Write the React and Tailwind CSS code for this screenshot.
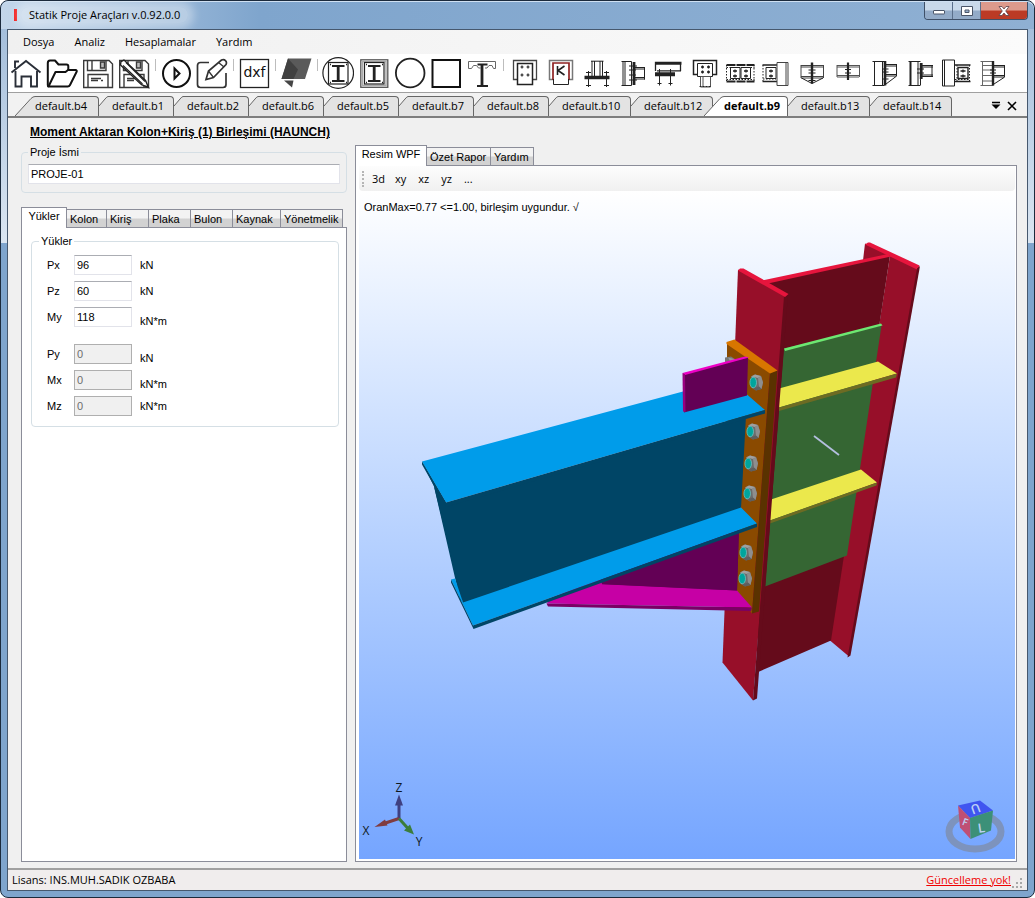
import React from "react";

const ui = "font-['Open_Sans','Noto_Sans',sans-serif]";
const form = "font-['Liberation_Sans',Arial,sans-serif]";

function Icon({ children }) {
  return (
    <svg viewBox="0 0 32 32" width="32" height="32" fill="none" stroke="#222" strokeWidth="1" aria-hidden="true">
      {children}
    </svg>
  );
}

const floppy = (
  <g stroke="#3a3a3a" strokeWidth="1.4">
    <path d="M1.7 3.5H27l3.5 3.5v23.5H1.7z" />
    <path d="M5.5 4v9.5h18.5V4M10 4v9" />
    <path d="M18.5 5h4v6h-4z" fill="#bbb" />
    <path d="M6 30V17.5h20V30" />
    <path d="M9 21.5h10M9 23.5h7M19 23.5h2" />
  </g>
);

const iSection = (
  <g>
    <rect x="6.5" y="5.5" width="19.5" height="21.5" strokeWidth="1.2" />
    <path d="M10 9h12.500M10 24h12.500" strokeWidth="2" />
    <path d="M16.200 9v15" strokeWidth="2.800" />
    <path d="M8 7.500h1M24 7.500h1M8 25.500h1M24 25.500h1" strokeWidth="1.500" />
  </g>
);

const icons = {
  home: (
    <g stroke="#2a2f38" strokeWidth="1.9">
      <path d="M1.500 15.500L16 4l14.500 11.500" />
      <path d="M5.500 14v15.500h6v-10h9.500v10h6V14" />
      <path d="M5 11V4.500h4" />
    </g>
  ),
  open: (
    <g stroke="#111" strokeWidth="2" strokeLinejoin="round">
      <path d="M2.500 29.500C1.800 29.500 1.800 29 1.800 28V6c0-1.600.7-2.500 2.200-2.500h5l3.500 4h8c1 0 1.800.8 1.800 1.800v4" />
      <path d="M2.500 29.500l7-14.500h10l2.500-2h7.500c1.200 0 1.600.9 1 2l-6.500 13c-.5 1-1.200 1.500-2.300 1.500z" />
    </g>
  ),
  save: floppy,
  saveAs: (
    <g>
      {floppy}
      <path d="M3 4.500l3-1.500L27.500 23.500l3 7-7-2.800L2.500 8z" fill="#fff" stroke="#222" strokeWidth="1.400" />
      <path d="M5 8.500L24.500 27M8 5.500L27 24.500M27.500 29l2.500 1" strokeWidth="1.200" />
    </g>
  ),
  run: (
    <g stroke="#111" strokeWidth="2">
      <circle cx="16.500" cy="16.500" r="13.500" />
      <path d="M14.500 11.500v10l5-5z" />
    </g>
  ),
  edit: (
    <g stroke="#333" strokeWidth="1.700">
      <path d="M13 5.500H4.500c-2 0-3 1-3 3V27.500c0 2 1 3 3 3H27c2 0 3-1 3-3V16" />
      <path d="M10 22.500l2.500-8.500L25.500 3c3-1.500 6 1.500 4.500 4.500L17.500 20.500z" fill="#fff" />
      <path d="M12.500 14l5 6.500M22.500 5.500l5.500 4.500" strokeWidth="1.300" />
    </g>
  ),
  dxf: (
    <g>
      <rect x="2.500" y="2.500" width="28" height="28" strokeWidth="1.300" />
      <text x="16.500" y="20" textAnchor="middle" fontSize="14" fill="#111" stroke="none" fontFamily="DejaVu Sans, sans-serif">dxf</text>
    </g>
  ),
  solid: (
    <g stroke="none">
      <path d="M8 1.500h23.500L25 22H1.500z" fill="#5a5a5a" />
      <path d="M8 1.500l10 11L13.500 22H1.500z" fill="#414141" />
      <path d="M4 23.500h9.500L12 30.500z" fill="#454545" />
    </g>
  ),
  roundI: (
    <g>
      <circle cx="16.200" cy="16" r="15.300" strokeWidth="1.200" />
      {iSection}
    </g>
  ),
  squareI: (
    <g>
      <rect x="2.800" y="2.800" width="27" height="27.500" stroke="#555" strokeWidth="1.300" />
      <rect x="4.500" y="4.500" width="23.500" height="24" stroke="#aaa" strokeWidth="1.500" />
      {iSection}
    </g>
  ),
  circle: <circle cx="16.200" cy="16" r="14.300" strokeWidth="1.800" />,
  square: <rect x="2.500" y="3" width="27.500" height="27" stroke="#111" strokeWidth="2" />,
  composite: (
    <g>
      <path d="M2.500 11.500v-7h27v7h-2l-1.500-3h-3l-2 2.500h-2M2.500 11.500h3l2-3h3l2 2.500h2" stroke="#666" />
      <path d="M11.500 7.500h10M11 29h11" strokeWidth="2.200" />
      <path d="M16 7v22" strokeWidth="2.800" />
    </g>
  ),
  plateDots: (
    <g>
      <path d="M9.500 22.500h-4v-19h23v19h-4" stroke="#444" strokeWidth="1.300" />
      <path d="M9.500 6.500h15V27.500h-15z" strokeWidth="1.500" />
      <path d="M12.500 10h3M18.500 10h3M12.500 18h3M18.500 18h3M14 8.500v3M20 8.500v3M14 16.500v3M20 16.500v3" strokeWidth="1.200" />
    </g>
  ),
  plateK: (
    <g>
      <path d="M9.500 22.500h-4v-19h23v19h-4" stroke="#777" strokeWidth="1.500" />
      <path d="M9 23V6h16v17" stroke="#8f2222" strokeWidth="1.700" />
      <path d="M9.500 22v5.500h15V22" />
      <path d="M13.500 9v9M20.500 9l-6.500 4.500 6.500 4.500" strokeWidth="1.600" />
    </g>
  ),
  base: (
    <g>
      <path d="M12 4v15M22.500 4v15M14.500 4v15M20 4v15M11 4.200h12.500" />
      <path d="M4.500 20.500h25" strokeWidth="3.500" />
      <path d="M8.500 14v16M26.500 14v16M6 15.500h5M24 15.500h5M6 28.500h5M24 28.500h5" />
    </g>
  ),
  side: (
    <g>
      <path d="M5.500 4.500h10M5.500 28.500h10M7 4.500v24M9 4.500v24M15.500 4.500v24" />
      <path d="M18 5v23" strokeWidth="2.800" />
      <path d="M18 10.500h11M18 12h11M18 20.500h11M18 22h11M28.500 10v12.500M13 9h8M13 13h7M13 18h7M13 23h8" />
    </g>
  ),
  seat: (
    <g>
      <path d="M3.500 14V5.500h26M3.500 7h26M28.500 5.500V14M5 13.800h24" strokeWidth="1.300" />
      <path d="M3 17.300h20" strokeWidth="4" />
      <path d="M7.500 12v16.500M18.500 12v16.500M5.500 26.500h4M16.500 26.500h4" />
    </g>
  ),
  hang: (
    <g>
      <path d="M9.500 17.500h-4v-14h23v14h-4" strokeWidth="1.500" />
      <path d="M9.500 6.500h15v13h-15z" />
      <path d="M13 10h3M19 10h3M13 15h3M19 15h3M14.500 8.500v3M20.500 8.500v3M14.500 13.500v3M20.500 13.500v3" strokeWidth="1.300" />
      <path d="M12.500 19.500h10V30h-10zM15 19.500V30" stroke="#555" />
      <path d="M11.500 29.500h12" strokeDasharray="2 1" />
    </g>
  ),
  splice: (
    <g>
      <path d="M2.500 8h28M2.500 24.500h28" strokeWidth="1.800" strokeDasharray="9 1" />
      <path d="M2.500 10.500h28M2.500 22.500h28M2.500 8v16M30 8v16" strokeDasharray="1.500 1.500" />
      <path d="M6.500 10.500h9.500v11H6.500zM17 10.500h9.500v11H17z" />
      <path d="M9 14h4M9 19h4M20 14h4M20 19h4M11 12.500v3M11 17.500v3M22 12.500v3M22 17.500v3" strokeWidth="1.300" />
    </g>
  ),
  spliceCol: (
    <g>
      <path d="M2.500 8H17M2.500 24.500H17" strokeWidth="1.600" />
      <path d="M3 8v16M3 22h13" strokeDasharray="1.500 1.500" />
      <path d="M6 10.500h10v11H6z" />
      <path d="M9 14h4M9 19h4M11 12.500v3M11 17.500v3" strokeWidth="1.300" />
      <path d="M17 5.500h11v23H17zM26 5.500v23" stroke="#444" />
    </g>
  ),
  twoHaunch: (
    <g>
      <path d="M5 8.500h22M5 10h22M5 19.500h22M5 21h22M5 8v13M27.500 8v13" stroke="#444" />
      <path d="M16 5.500v21" strokeWidth="2.400" />
      <path d="M5.500 21L16 26.500 27 21M12.500 13h7M12.500 16h7M12.500 23.500h7" />
    </g>
  ),
  twoPlain: (
    <g>
      <path d="M5 8.500h22M5 10h22M5 18.500h22M5 20h22M5 8v12M27.500 8v12" stroke="#555" />
      <path d="M16 5.500v17.500" strokeWidth="2.200" />
      <path d="M13 12.500h6M13 16h6" />
    </g>
  ),
  colHaunch: (
    <g>
      <path d="M4.500 4.500h12M4.500 28.500h12M6.500 4v24.500M14.500 4v24.500" />
      <path d="M17 4v24.500" strokeWidth="2.600" />
      <path d="M17 7.500h12M17 9h12M17 17.500h12M17 19h12M28.500 7v12M28 19.500L18 27M14 12h6.500M14 15h6.500M14 22h6.500" />
    </g>
  ),
  colPlain: (
    <g>
      <path d="M4.500 4.500h12M4.500 28.500h12M6.500 4v24.500M14 4v24.500" />
      <path d="M6.500 4v24.500" strokeWidth="2" />
      <path d="M17.200 6v16" strokeWidth="2.800" />
      <path d="M17 8.500h12M17 10h12M17 18h12M17 19.500h12M28 8v12M13 12h7M13 16h7M16.500 22v6" />
    </g>
  ),
  colPlate: (
    <g>
      <path d="M2.500 3h12v26h-12zM4.500 3v26" />
      <path d="M15 8h15.500M15 24.500h15.500" strokeWidth="1.600" />
      <path d="M29.500 8v16M15 22.500h14M17 8v16" strokeDasharray="1.500 1.500" />
      <path d="M18 10.500h10v11H18z" strokeWidth="1.400" />
      <path d="M20.500 14h5M20.500 19h5M23 12.500v3M23 17.500v3" strokeWidth="1.300" />
    </g>
  ),
  colStiff: (
    <g>
      <path d="M4.500 4.500h13M4.500 28.500h13M6.500 4v24.500M7 8.500h9.500M7 13h9.500M7 18.500h9.500M7 24h9.500" stroke="#666" />
      <path d="M17 4v24.500" strokeWidth="2.400" />
      <path d="M17 8.500h12M17 10h12M17 18.500h12M17 20h12M28.500 8v12M28 20.500L18 27M14 13h6M14 16h6" />
    </g>
  ),
};

const toolbar = [
  ["home", "Ana sayfa"], ["open", "Aç"], ["save", "Kaydet"], ["saveAs", "Farklı kaydet"], null,
  ["run", "Hesapla"], ["edit", "Düzenle"], null,
  ["dxf", "dxf"], null,
  ["solid", "3d"], null,
  ["roundI", "Daire I"], ["squareI", "Kare I"], ["circle", "Daire"], ["square", "Kare"], ["composite", "Kompozit"], null,
  ["plateDots", "Levha"], ["plateK", "Kaynaklı levha"], ["base", "Taban"], ["side", "Alın levhası"], ["seat", "Oturma"],
  ["hang", "Askı"], ["splice", "Ek"], ["spliceCol", "Kolon eki"], ["twoHaunch", "Çift guseli"], ["twoPlain", "Kiriş eki"],
  ["colHaunch", "Haunch"], ["colPlain", "Kolon kiriş"], ["colPlate", "Kolon levha"], ["colStiff", "Rijit"],
];

const docs = [
  ["default.b4", "w-[84px]"], ["default.b1", "w-[75px]"], ["default.b2", "w-[75px]"], ["default.b6", "w-[75px]"],
  ["default.b5", "w-[75px]"], ["default.b7", "w-[75px]"], ["default.b8", "w-[75px]"], ["default.b10", "w-[82px]"],
  ["default.b12", "w-[82px]"], ["default.b9", "w-[84px]"], ["default.b13", "w-[82px]"], ["default.b14", "w-[82px]"],
];

function DocTab({ name, width, first, active }) {
  const long = first || active;
  return (
    <button
      type="button"
      role="tab"
      aria-selected={active}
      className={`flex h-5 shrink-0 items-stretch text-[11px] ${width} ${active ? "relative z-10 -ml-[9px] font-bold" : ""}`}
    >
      {long ? (
        <svg width="20" height="20" className="shrink-0" aria-hidden="true">
          <path d="M0 20L16 2.500Q18 .5 20 .5V20z" fill={active ? "#fff" : "#e3e3e3"} />
          <path d="M0 20L16 2.500Q18 .5 20 .5" fill="none" stroke="#666" />
        </svg>
      ) : (
        <svg width="9" height="20" className="shrink-0" aria-hidden="true">
          <path d="M0 10L6 3Q8 .5 9 .5V20H0z" fill="#e3e3e3" />
          <path d="M0 10L6 3Q8 .5 9 .5" fill="none" stroke="#666" />
        </svg>
      )}
      <span
        className={`flex grow items-center whitespace-nowrap rounded-tr border-r border-t border-[#666] ${
          long ? "" : "pl-1"
        } ${active ? "bg-white" : "bg-[#e3e3e3]"}`}
      >
        {name}
      </span>
    </button>
  );
}

function PageTabs({ items, label }) {
  return (
    <div role="tablist" aria-label={label} className="flex items-end">
      {items.map(([name, width], i) => (
        <button
          key={name}
          type="button"
          role="tab"
          aria-selected={i === 0}
          className={`relative shrink-0 whitespace-nowrap border border-b-0 border-[#8b8d99] ${width} ${
            i === 0
              ? "z-10 -mb-px h-[21px] bg-white pb-1 text-center"
              : "-ml-px h-[18px] bg-linear-to-b from-[#f3f3f3] from-45% to-[#d2d2d2] to-55% pl-[3px] text-left"
          }`}
        >
          {name}
        </button>
      ))}
    </div>
  );
}

const loads = [
  ["Px", "96", "kN"],
  ["Pz", "60", "kN"],
  ["My", "118", "kN*m", "low"],
  ["Py", "0", "kN", "low", true],
  ["Mx", "0", "kN*m", "low", true],
  ["Mz", "0", "kN*m", "", true],
];

function LoadRow({ row }) {
  const [name, value, unit, low, off] = row;
  return (
    <div className="flex h-5 items-center">
      <label htmlFor={name} className="w-[27px]">{name}</label>
      <input
        id={name}
        defaultValue={value}
        disabled={off}
        className={`h-5 w-[58px] border px-0.5 ${
          off ? "border-[#afafaf] bg-[#f0f0f0] text-[#6d6d6d]" : "border-[#e2e3ea] border-t-[#abadb3] bg-white"
        }`}
      />
      <span className={`pl-2 ${low ? "self-end leading-3" : ""}`}>{unit}</span>
    </div>
  );
}

function Bolt({ x, y }) {
  return (
    <g transform={`translate(${x} ${y})`}>
      <path d="M-5-6L-1-8 5-6.500 7 0 5.500 6.500 0 8-5 5z" fill="#6c6c6c" />
      <path d="M-5-6L-1-8 5-6.500 2-4.500z" fill="#a0a0a0" />
      <path d="M2-4.500L5-6.500 7 0 5.500 6.500 3 4z" fill="#8e8e8e" />
      <path d="M3 4L5.500 6.500 0 8-3 6z" fill="#5f5f5f" />
      <ellipse cx="-2.800" cy="0" rx="3.300" ry="5.300" fill="#00a59d" stroke="#79c9c7" strokeWidth=".7" />
    </g>
  );
}

function Scene() {
  return (
    <svg viewBox="359 192 656 667" className="absolute inset-0 h-full w-full" role="img" aria-label="3d model">
      <path d="M865 244L919 267 849 657 830 641 890 256 863 261z" fill="#970f29" />
      <path d="M865 245L868 243 870 243 919.500 266 917 270z" fill="#e6153d" />
      <path d="M917 269L920 266.500 850.500 656 847.500 658z" fill="#650b1b" />
      <path d="M766 283L890 256 831 641 757 673z" fill="#650b1b" />
      <path d="M762 281L888 254.500 891 257 768 284z" fill="#e6153d" />
      <path d="M784 349L881.500 326 847 556 765 587z" fill="#356633" />
      <path d="M784 349L881 324 882.500 326 785 351.500z" fill="#6de872" />
      <path d="M779 389L878 362 897 374 779 408z" fill="#ebe84c" />
      <path d="M779 408L897 374 896 378 779 411.500z" fill="#6d6b23" />
      <path d="M771 500L861 470 877 483 770 521z" fill="#ebe84c" />
      <path d="M770 521L877 483 876.500 486 770 524z" fill="#6d6b23" />
      <path d="M814 436.500L839 455.500" stroke="#b4bfdf" strokeWidth="1.800" />

      <path d="M738 270L785 296 753 701 722.500 663z" fill="#970f29" />
      <path d="M784 297L788 295 775 460 757 699 753 701z" fill="#650b1b" />
      <path d="M738 271L740 269 743.500 269 788.500 294.500 785 297.500z" fill="#e6153d" />

      <path d="M727 344L770 373 752 614 737 594 727 580z" fill="#8a4a00" />
      <path d="M770 373L777.500 371 759 612 752 614z" fill="#5a3200" />
      <path d="M726.500 344.500V342.500L734.500 340 777.500 371 770 374z" fill="#d87600" />
      <path d="M725 358L731 357 737 361 733 366 725 364z" fill="#777" />
      <path d="M728 358L736 360 732 365z" fill="#999" />

      <path d="M739 528L737 592 590 588z" fill="#630055" />
      <path d="M602 578L602 584.500 737 591 752 608 546.500 604 552 598z" fill="#c600a5" />
      <path d="M600 576L739 528 737 591 602 584.800z" fill="#630055" />
      <path d="M546.500 604L752 608 751 611.500 548 607z" fill="#7a0065" />

      <path d="M422 462L446 503 463 603 460 600 434 487z" fill="#004566" />
      <path d="M434 487L446 504 746 416 741 509 463 604z" fill="#004566" />
      <path d="M422 462L683 392 747 378 747 395 765 410.500 446 503z" fill="#009cea" />
      <path d="M422 462L446 503 765 410.500 765 414 446 507.500 422 465z" fill="#004566" />
      <path d="M451 580L455 579 463 603 741 508 757 524 473 626z" fill="#009cea" />
      <path d="M451 580L473 626 757 524 757 527.500 473.500 629.500 451 583z" fill="#004566" />

      <path d="M683 374L748 358 747 396 684 413z" fill="#630055" />
      <path d="M682.500 373.500L745 357 749 358 685 375.500z" fill="#ee00c6" />
      <path d="M682.500 373.500L685 375 685.500 412.500 683 412z" fill="#99007f" />

      <Bolt x={756} y={383} />
      <Bolt x={753} y={432} />
      <Bolt x={751} y={464} />
      <Bolt x={750} y={494} />
      <Bolt x={746} y={553} />
      <Bolt x={745} y={579} />

      <g>
        <path d="M399 819V804" stroke="#3f4080" strokeWidth="3" />
        <path d="M399 795L403 806H395z" fill="#3f4080" />
        <path d="M399 819L384 824" stroke="#803c40" strokeWidth="3" />
        <path d="M374.500 827.500L385 820 387.500 826z" fill="#803c40" />
        <path d="M399 819L408 829" stroke="#3b7d3b" strokeWidth="3" />
        <path d="M414 835L404 831 410 825z" fill="#3b7d3b" />
        <g fontSize="12" fill="#101820" textAnchor="middle" fontFamily="Open Sans, sans-serif">
          <text x="399" y="792">Z</text>
          <text x="366" y="835">X</text>
          <text x="419" y="846">Y</text>
        </g>
      </g>

      <g>
        <ellipse cx="975" cy="832" rx="26" ry="17.500" fill="none" stroke="#7d93bd" strokeWidth="7" />
        <path d="M958 806L980 801 993 811 970 818.500z" fill="#3f55f0" />
        <path d="M958 806L970 818.500 970.500 839.500 960 828z" fill="#bf4f74" />
        <path d="M970 818.500L993 811 991 831 970.500 839.500z" fill="#3c9078" />
        <g fill="#bcd0f5" textAnchor="middle" fontFamily="Open Sans, sans-serif" fontWeight="600">
          <text fontSize="13" transform="translate(974 805) rotate(160)">U</text>
          <text fontSize="13" transform="translate(982 833) rotate(-8)">L</text>
          <text fontSize="10" transform="translate(964 826) rotate(20)">F</text>
        </g>
      </g>
    </svg>
  );
}

export default function App() {
  return (
    <div className={`flex min-h-screen w-full flex-col overflow-hidden rounded-lg border border-[#1b2a3c] bg-linear-to-b from-[#9db9d8] to-[#7fa5cd] bg-[linear-gradient(to_bottom,#9db9d8,#dbe6f2_27%,#7fa5cd_27%)] text-black ${ui}`}>
      <header className="flex h-7 shrink-0 items-start justify-between rounded-t-lg border-t border-[#cfe0f2] bg-linear-to-r from-[#c3d6ea] via-[#7fa5cd] via-25% to-[#8fb0d3]">
        <div className="flex h-[26px] items-center pl-[13px]">
          <span className="h-3 w-[3px] bg-[#f01010]" />
          <h1 className="ml-1 rounded-full bg-white/35 px-2 text-[11px] leading-4 shadow-[0_0_8px_6px_rgba(255,255,255,0.35)]">
            Statik Proje Araçları v.0.92.0.0
          </h1>
        </div>
        <div className="mr-1.5 flex h-[18px] overflow-hidden rounded-b border border-t-0 border-[#3f5068]">
          <button type="button" aria-label="Simge durumuna küçült" className="flex w-7 items-center justify-center border-r border-[#5b6f8b] bg-linear-to-b from-[#c9d9ea] from-45% to-[#93abc8] to-55%">
            <svg width="14" height="12" aria-hidden="true"><rect x="1.500" y="5.500" width="11" height="3.500" rx=".5" fill="#fff" stroke="#4a5568" /></svg>
          </button>
          <button type="button" aria-label="Ekranı kapla" className="flex w-7 items-center justify-center border-r border-[#5b6f8b] bg-linear-to-b from-[#c9d9ea] from-45% to-[#93abc8] to-55%">
            <svg width="14" height="12" aria-hidden="true"><path d="M1.500 1.500h11v9h-11zM5 5h4v2.500H5z" fill="#fff" fillRule="evenodd" stroke="#4a5568" /></svg>
          </button>
          <button type="button" aria-label="Kapat" className="flex w-[46px] items-center justify-center bg-linear-to-b from-[#dc9a8c] from-45% to-[#bb3a25] to-55%">
            <svg width="14" height="12" aria-hidden="true"><path d="M2 1.500h3L7 4l2-2.500h3L8.700 6l3.300 4.500H9L7 8l-2 2.500H2L5.300 6z" fill="#fff" stroke="#5a4048" strokeWidth=".8" /></svg>
          </button>
        </div>
      </header>

      <div className="mx-1.5 mb-1.5 flex grow flex-col border border-[#46586e] bg-[#f0f0f0]">
        <nav className="flex h-6 shrink-0 items-center bg-linear-to-r from-[#f0f0f0] to-[#fbfbfb] pl-[15px] text-[11px]">
          <button type="button" className="mr-5">Dosya</button>
          <button type="button" className="mr-5">Analiz</button>
          <button type="button" className="mr-5">Hesaplamalar</button>
          <button type="button">Yardım</button>
        </nav>

        <div role="toolbar" aria-label="Araçlar" className="flex h-[39px] shrink-0 items-center overflow-hidden border-b border-[#a0a0a0] bg-white">
          {toolbar.map((item, i) =>
            item ? (
              <button key={i} type="button" aria-label={item[1]} className="flex w-9 shrink-0 justify-center">
                <Icon>{icons[item[0]]}</Icon>
              </button>
            ) : (
              <span key={i} className="flex h-7 w-1.5 shrink-0 justify-center">
                <span className="h-3 w-px bg-[#bdbdbd]" />
              </span>
            )
          )}
        </div>

        <div className="flex h-[25px] shrink-0 items-end justify-between border-b-2 border-[#7d7d7d] bg-[#f2f2f2] pl-[7px] pr-2.5">
          <div role="tablist" aria-label="Belgeler" className="flex">
            {docs.map(([name, width], i) => (
              <DocTab key={name} name={name} width={width} first={i === 0} active={name === "default.b9"} />
            ))}
          </div>
          <div className="flex h-5 items-center gap-1.5">
            <button type="button" aria-label="Belge listesi">
              <svg width="10" height="10" aria-hidden="true"><path d="M1 1.500h8" stroke="#000" strokeWidth="1.500" /><path d="M.5 3.500h9L5 8z" /></svg>
            </button>
            <button type="button" aria-label="Belgeyi kapat">
              <svg width="10" height="10" aria-hidden="true"><path d="M1 1l8 8M9 1L1 9" stroke="#000" strokeWidth="1.600" /></svg>
            </button>
          </div>
        </div>

        <main className={`flex grow gap-2 pb-1.5 pl-[13px] pr-2.5 text-[11px] leading-4 ${form}`}>
          <section className="flex w-[326px] shrink-0 flex-col pt-1.5">
            <h2 className="whitespace-nowrap pl-[9px] text-xs font-bold underline">Moment Aktaran Kolon+Kiriş (1) Birleşimi (HAUNCH)</h2>
            <fieldset className="mt-1 rounded border border-[#d5dfe5] px-1.5 pb-2">
              <legend className="px-0.5">
                <label htmlFor="project">Proje İsmi</label>
              </legend>
              <input id="project" defaultValue="PROJE-01" className="mt-1 h-5 w-full border border-[#e2e3ea] border-t-[#abadb3] bg-white px-0.5" />
            </fieldset>

            <div className="mt-3.5 flex grow flex-col">
              <PageTabs
                label="Veriler"
                items={[
                  ["Yükler", "w-[46px]"], ["Kolon", "w-[41px]"], ["Kiriş", "w-[43px]"], ["Plaka", "w-[43px]"],
                  ["Bulon", "w-[43px]"], ["Kaynak", "w-[49px]"], ["Yönetmelik", "w-[63px]"],
                ]}
              />
              <div className="grow border border-[#8b8d99] bg-white pl-[9px] pr-[7px] pt-[5px]">
                <fieldset className="rounded border border-[#d5dfe5] px-[15px] pb-2.5">
                  <legend className="-ml-2 px-0.5">Yükler</legend>
                  <div className="flex flex-col gap-1.5 pt-1.5">
                    {loads.slice(0, 3).map((row) => <LoadRow key={row[0]} row={row} />)}
                  </div>
                  <div className="flex flex-col gap-1.5 pt-[17px]">
                    {loads.slice(3).map((row) => <LoadRow key={row[0]} row={row} />)}
                  </div>
                </fieldset>
              </div>
            </div>
          </section>

          <section className="flex min-w-0 grow flex-col pt-[27px]">
            <PageTabs label="Görünüm" items={[["Resim WPF", "w-[72px]"], ["Özet Rapor", "w-[65px]"], ["Yardım", "w-[44px]"]]} />
            <div className="flex grow flex-col border border-[#8b8d99] bg-white pb-0.5 pl-[3px] pr-px">
              <div className={`flex h-[25px] shrink-0 items-center rounded-b bg-linear-to-b from-[#fdfdfd] to-[#f0f0f0] pl-[3px] ${ui}`}>
                <span className="mr-2 h-4 border-l-2 border-dotted border-[#b5b5b5]" />
                <button type="button" className="mr-2.5">3d</button>
                <button type="button" className="mr-3">xy</button>
                <button type="button" className="mr-3">xz</button>
                <button type="button" className="mr-3">yz</button>
                <button type="button">...</button>
              </div>
              <div className="relative grow bg-linear-to-b from-[#ffffff] to-[#75a5ff]">
                <Scene />
                <p className="relative pl-[5px] pt-2">OranMax=0.77 &lt;=1.00, birleşim uygundur. √</p>
              </div>
            </div>
          </section>
        </main>

        <footer className="flex h-[22px] shrink-0 items-center border-t-2 border-[#a0a0a0] bg-[#f0eded] pl-1 pr-0.5 text-[11px]">
          <span className="grow">Lisans: INS.MUH.SADIK OZBABA</span>
          <a href="#guncelleme" className="text-[#f00000] underline">Güncelleme yok!</a>
          <svg width="14" height="14" className="self-end" fill="#a8a8a8" aria-hidden="true">
            <path d="M9 2h2v2H9zM5 6h2v2H5zM9 6h2v2H9zM1 10h2v2H1zM5 10h2v2H5zM9 10h2v2H9z" />
          </svg>
        </footer>
      </div>
    </div>
  );
}
